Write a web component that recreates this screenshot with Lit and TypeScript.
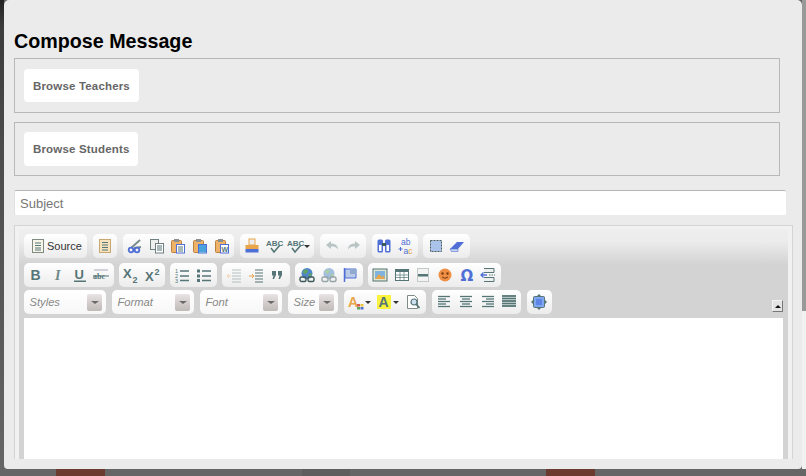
import { LitElement, css, html, svg } from "lit";
import { customElement } from "lit/decorators.js";

const TEAL = "#557576";
const BLUE = "#4f6fd6";
const ORANGE = "#e9a54a";
const SANS = "Liberation Sans, sans-serif";

const lines = (ys: number[], x1 = 2, x2 = 14, w = 1.3) =>
  ys.map(
    (y) =>
      svg`<line x1=${x1} x2=${x2} y1=${y} y2=${y} stroke=${TEAL} stroke-width=${w} />`,
  );

const paste = (inner: unknown) => svg`
  <rect x="1.5" y="2.5" width="10" height="12" rx="1" fill="#eeb268" stroke="#b9803f" />
  <rect x="4" y="1" width="5" height="3" fill="#8a8f92" />
  <rect x="6.5" y="6.5" width="8" height="8.5" fill="#fff" stroke=${BLUE} />
  ${inner}`;

const globe = svg`
  <circle cx="8" cy="6.5" r="5.5" fill="#4f86c9" />
  <path d="M4 4l3-2 2 2-2 3-3-1zM9 8l3-2 1 2-3 2z" fill="#5fa35f" />
  <rect x="1" y="10" width="6" height="4.5" rx="1.5" fill="none" stroke="#3f5a5a" stroke-width="1.4" />
  <rect x="9" y="10" width="6" height="4.5" rx="1.5" fill="none" stroke="#3f5a5a" stroke-width="1.4" />`;

const label = (x: number, y: number, size: number, t: string) =>
  svg`<text x=${x} y=${y} font-size=${size} font-family=${SANS} font-weight="bold" fill=${TEAL}>${t}</text>`;

const check = svg`<path d="M5 10l3 4 6-7" fill="none" stroke=${TEAL} stroke-width="1.6" />`;

const ICONS: Record<string, unknown> = {
  source: svg`<rect x="2.5" y="1.5" width="11" height="13" fill="#f7f4e8" stroke="#7f8a80" />${lines([5, 7.5, 10, 12], 5, 11, 1)}`,
  templates: svg`<rect x="2.5" y="1.5" width="11" height="13" fill="#f6e2bd" stroke="#c9a873" />${lines([4.5, 7, 9.5, 12], 5, 11, 1.1)}`,
  cut: svg`<path d="M4 10L13 2M7 10l7-1" stroke="#7d8e8e" stroke-width="2" fill="none" /><circle cx="4" cy="12" r="2.3" fill="none" stroke=${BLUE} stroke-width="1.8" /><circle cx="10" cy="12" r="2.3" fill="none" stroke=${BLUE} stroke-width="1.8" />`,
  copy: svg`<rect x="1.5" y="1.5" width="8" height="10" fill="#eef0ee" stroke="#6f8080" /><rect x="6.5" y="5.5" width="8" height="9.5" fill="#fff" stroke="#6f8080" />${lines([8, 10, 12], 8, 13, 1)}`,
  paste: paste(lines([9, 11, 13], 8, 13, 1)),
  pasteText: paste(svg`<rect x="7" y="7" width="7" height="7.5" fill="#4aa3dc" />`),
  pasteWord: paste(label(7.5, 13.5, 7, "W")),
  print: svg`<rect x="5" y="1" width="6" height="6" fill="#eee" stroke=${ORANGE} /><rect x="1.5" y="7" width="13" height="4" fill=${ORANGE} /><rect x="1.5" y="11" width="13" height="3.5" fill=${BLUE} />`,
  spell: svg`${label(0, 7.5, 8, "ABC")}${check}`,
  undo: svg`<path d="M2 7l5-4v2.5c4 0 7 2 7 6-1.5-2.5-4-3-7-3V11z" fill="#b9c5c5" />`,
  redo: svg`<path d="M14 7L9 3v2.5c-4 0-7 2-7 6 1.5-2.5 4-3 7-3V11z" fill="#b9c5c5" />`,
  find: svg`<rect x="1.5" y="1.5" width="5.5" height="13" rx="1.5" fill=${BLUE} /><rect x="9" y="1.5" width="5.5" height="13" rx="1.5" fill=${BLUE} /><rect x="6" y="5" width="4" height="3" fill="#3f5a5a" /><rect x="3" y="7" width="2.5" height="6" fill="#fff" /><rect x="10.5" y="7" width="2.5" height="6" fill="#fff" />`,
  replace: svg`<text x="3" y="7" font-size="8.5" font-family=${SANS} fill=${BLUE}>ab</text><text x="5.5" y="15.5" font-size="8.5" font-family=${SANS} fill=${BLUE}>a<tspan fill=${ORANGE}>c</tspan></text><path d="M0.5 11h4M2.5 9v4" stroke=${BLUE} />`,
  selectAll: svg`<rect x="2.5" y="2.5" width="11" height="11" fill="#a9c3ea" stroke="#4a5d5d" stroke-dasharray="2 1" />`,
  eraser: svg`<path d="M1 11l7-7h7l-6 7z" fill=${BLUE} /><path d="M1 11h8v2.5H2.5z" fill="#c9d6ee" stroke=${BLUE} stroke-width=".6" />`,
  bold: label(2.5, 13, 14, "B"),
  italic: svg`<text x="5" y="13" font-size="14" font-family="Liberation Serif, serif" font-style="italic" font-weight="bold" fill="#6f8686">I</text>`,
  underline: svg`${label(2.5, 11.5, 13, "U")}<rect x="2" y="13.5" width="12" height="1.5" fill=${TEAL} />`,
  strike: svg`<text x="0" y="12" font-size="8" font-family="Liberation Serif, serif" font-weight="bold" fill=${TEAL}>abc</text><line x1="0" x2="16" y1="9" y2="9" stroke=${TEAL} /><line x1="1" x2="15" y1="3" y2="3" stroke="#aab" />`,
  sub: svg`${label(0, 11, 13, "X")}${label(9.5, 15.5, 9, "2")}`,
  sup: svg`${label(0, 14, 13, "X")}${label(9.5, 7.5, 9, "2")}`,
  ol: svg`<text x="1" y="5.5" font-size="5.5" font-family=${SANS} fill=${TEAL}>1</text><text x="1" y="10.5" font-size="5.5" font-family=${SANS} fill=${TEAL}>2</text><text x="1" y="15.5" font-size="5.5" font-family=${SANS} fill=${TEAL}>3</text>${lines([4, 9, 13.5], 6, 15)}`,
  ul: svg`<rect x="1" y="2.5" width="3" height="3" fill=${TEAL} /><rect x="1" y="7.5" width="3" height="3" fill=${TEAL} /><rect x="1" y="12" width="3" height="3" fill=${TEAL} />${lines([4, 9, 13.5], 6, 15)}`,
  outdent: svg`<g opacity=".4">${lines([3, 6, 9, 12, 15], 6, 15, 1)}<path d="M1 9h4M3 7l-2 2 2 2" stroke=${ORANGE} fill="none" /></g>`,
  indent: svg`${lines([3, 6, 9, 12, 15], 7, 15, 1)}<path d="M1 9h5M4 7l2 2-2 2" stroke=${ORANGE} fill="none" />`,
  quote: svg`<path d="M3 4h4v4l-2 4H3.5l1-3.5H3zM9 4h4v4l-2 4H9.5l1-3.5H9z" fill=${TEAL} />`,
  link: globe,
  unlink: svg`<g opacity=".5">${globe}</g>`,
  anchor: svg`<path d="M2.5 1v14" stroke=${BLUE} stroke-width="1.5" /><path d="M3 2h11v9H3z" fill="#b9cbe6" stroke=${BLUE} /><path d="M8 2h6v5H8z" fill="#8fa9cf" />`,
  image: svg`<rect x="1" y="2" width="14" height="12" fill="#dfe6d2" stroke=${TEAL} /><rect x="3" y="4" width="10" height="8" fill="#7fb2e0" /><path d="M3 12l4-5 3 3 1.5-1.5L13 12z" fill=${ORANGE} />`,
  table: svg`<rect x="1.5" y="2.5" width="13" height="11" fill="#fff" stroke=${TEAL} /><rect x="1.5" y="2.5" width="13" height="2.5" fill=${TEAL} /><path d="M6 5v8M10 5v8M2 8h12M2 10.5h12" stroke=${TEAL} stroke-width=".7" />`,
  hr: svg`<rect x="2.5" y="1.5" width="11" height="13" fill="#f3f3f3" stroke="#c3c8c8" /><rect x="3" y="7" width="10" height="2.5" fill=${TEAL} />`,
  smiley: svg`<circle cx="8" cy="8" r="6.5" fill="#ee8f45" /><circle cx="5.5" cy="6.5" r="1.2" fill="#7a3b10" /><circle cx="10.5" cy="6.5" r="1.2" fill="#7a3b10" /><path d="M5 10q3 2.5 6 0" fill="none" stroke="#7a3b10" />`,
  omega: svg`<text x="1.5" y="13.5" font-size="15" font-weight="bold" font-family="DejaVu Sans, sans-serif" fill=${BLUE}>Ω</text>`,
  pagebreak: svg`<path d="M4 1.5h10v4H4M4 14.5h10v-4H4" fill="#eee" stroke=${TEAL} /><path d="M1 8h6M3.5 5.5L1 8l2.5 2.5" fill="none" stroke=${BLUE} stroke-width="1.3" /><path d="M9 8h6" stroke=${TEAL} stroke-dasharray="1.5 1" />`,
  textColor: svg`<text x="0" y="12.5" font-size="14" font-weight="bold" font-family=${SANS} fill=${ORANGE}>A</text><rect x="9" y="10" width="3" height="2.5" fill="#d65a4a" /><rect x="12.5" y="10" width="3" height="2.5" fill="#e9c53a" /><rect x="9" y="13" width="3" height="2.5" fill="#5fa35f" /><rect x="12.5" y="13" width="3" height="2.5" fill=${BLUE} />`,
  bgColor: svg`<rect x="1" y="1" width="14" height="14" fill="#fbf33c" /><text x="2.5" y="13" font-size="14" font-weight="bold" font-family=${SANS} fill=${TEAL}>A</text>`,
  findDoc: svg`<path d="M2.5 1.5h7l3 3v10h-10z" fill="#fff" stroke="#7f8a8a" /><circle cx="9" cy="8" r="3" fill="#cfe0f2" stroke=${TEAL} stroke-width="1.2" /><path d="M11 10l3.5 4" stroke=${TEAL} stroke-width="1.8" />`,
  left: svg`${lines([2.5, 7.5, 12.5], 2, 14)}${lines([5, 10], 2, 10)}`,
  center: svg`${lines([2.5, 7.5, 12.5], 2, 14)}${lines([5, 10], 4, 12)}`,
  right: svg`${lines([2.5, 7.5, 12.5], 2, 14)}${lines([5, 10], 6, 14)}`,
  justify: lines([2, 4.5, 7, 9.5, 12], 1, 15, 1.8),
  maximize: svg`<path d="M8 0l2 2H6zM8 16l-2-2h4zM0 8l2-2v4zM16 8l-2 2V6z" fill=${TEAL} /><rect x="2.5" y="2.5" width="11" height="11" rx="1" fill="#7fa6ee" stroke=${TEAL} /><rect x="5" y="5" width="6" height="6" fill="#5f86e6" />`,
};

type Btn = { i: string; arrow?: boolean };

const b = (i: string): Btn => ({ i });
const arrow = (i: string): Btn => ({ i, arrow: true });

const ROW1: Btn[][] = [
  [b("templates")],
  [b("cut"), b("copy"), b("paste"), b("pasteText"), b("pasteWord")],
  [b("print"), b("spell"), arrow("spell")],
  [b("undo"), b("redo")],
  [b("find"), b("replace")],
  [b("selectAll"), b("eraser")],
];
const ROW2: Btn[][] = [
  [b("bold"), b("italic"), b("underline"), b("strike")],
  [b("sub"), b("sup")],
  [b("ol"), b("ul")],
  [b("outdent"), b("indent"), b("quote")],
  [b("link"), b("unlink"), b("anchor")],
  [b("image"), b("table"), b("hr"), b("smiley"), b("omega"), b("pagebreak")],
];

@customElement("app-root")
export class AppRoot extends LitElement {
  static styles = css`
    :host {
      display: block;
      width: 806px;
      height: 476px;
      overflow: hidden;
      background: #666;
      font-family: "Liberation Sans", Arial, sans-serif;
    }
    .page {
      display: grid;
      grid-template-columns: 4px 798px 4px;
      grid-template-rows: 469px 7px;
      height: 476px;
    }
    .edge-left {
      background: linear-gradient(#222 0, #3c3c3c 26px, #4c4c4c 150px, #666 100%);
    }
    .edge-right {
      display: flex;
      flex-direction: column;
    }
    .scroll-thumb {
      height: 311px;
      background: #999;
    }
    .scroll-rest {
      flex: 1;
      background: #f1f1f1;
    }
    .modal {
      background: #ebebeb;
      border-radius: 5px 5px 4px 4px;
      padding: 30px 9px 0 10px;
      overflow: hidden;
    }
    h1 {
      margin: 0 0 6px;
      font-size: 19.7px;
      line-height: 22px;
      font-weight: bold;
      color: #000;
    }
    .box {
      width: 766px;
      box-sizing: border-box;
      border: 1px solid #b8b8b8;
      padding: 10px 9px;
      margin-bottom: 9px;
      display: flex;
    }
    .box.second {
      margin-bottom: 14px;
      padding: 9px 9px;
    }
    .pick {
      height: 33px;
      padding: 0 9px;
      background: #fff;
      border: none;
      border-radius: 4px;
      font: bold 11.5px "Liberation Sans", Arial, sans-serif;
      letter-spacing: 0.17px;
      color: #666;
    }
    .second .pick {
      height: 34px;
    }
    input {
      display: block;
      width: 772px;
      height: 25px;
      box-sizing: border-box;
      border: none;
      border-top: 1px solid #b5b5b5;
      border-left: 1px solid #e0e0e0;
      border-radius: 2px;
      background: #fff;
      padding: 0 5px;
      margin-bottom: 10px;
      font: 13px "Liberation Sans", Arial, sans-serif;
    }
    input::placeholder {
      color: #777;
      opacity: 1;
    }
    .editor {
      width: 779px;
      box-sizing: border-box;
      height: 234px;
      border: 1px solid #d4d4d4;
      border-bottom: none;
      background: #f1f1f1;
      padding: 3px 4px 0;
    }
    .inner {
      height: 230px;
      display: flex;
      flex-direction: column;
      background: linear-gradient(#eee 0, #ececec 12px, #d3d3d3 36px);
    }
    .toolbar {
      padding: 5px 5px 4px;
    }
    .row {
      display: flex;
      height: 24px;
    }
    .r1 {
      gap: 5.5px;
      margin-bottom: 5px;
    }
    .r2 {
      gap: 5px;
      margin-bottom: 3px;
    }
    .r3 {
      gap: 6px;
    }
    .group {
      display: flex;
      align-items: center;
      padding: 0 1.5px;
      border-radius: 5px;
      background: linear-gradient(#fff, #ececec);
      box-sizing: border-box;
    }
    .btn {
      width: 21.7px;
      height: 22px;
      display: flex;
      align-items: center;
      justify-content: center;
      flex: none;
    }
    .btn.more {
      width: 28.2px;
      gap: 1px;
    }
    .btn svg,
    .source svg {
      width: 16px;
      height: 16px;
      flex: none;
      overflow: visible;
    }
    .caret {
      width: 0;
      height: 0;
      border: 3px solid transparent;
      border-top: 3px solid #333;
      border-bottom: none;
      flex: none;
    }
    .source {
      width: 63px;
      gap: 1px;
      padding-left: 6px;
      font-size: 11px;
      color: #333;
    }
    .combo {
      width: 82px;
      justify-content: space-between;
      padding: 0 4px 0 5.5px;
      background: linear-gradient(#fff, #f7f7f7);
      font-size: 11.2px;
      font-style: italic;
      color: #888;
    }
    .combo.size {
      width: 50px;
    }
    .drop {
      width: 15px;
      height: 17px;
      border-radius: 2px;
      background: linear-gradient(#e8e4e3, #bfb9b7);
      display: flex;
      align-items: center;
      justify-content: center;
    }
    .drop .caret {
      border-top-color: #6a6a6a;
      border-width: 3px 4px 0;
      border-top-style: solid;
    }
    .colors {
      width: 82px;
    }
    .aligns {
      width: 89px;
    }
    .collapse {
      margin: 10px 0 2px auto;
      width: 11px;
      height: 12px;
      box-sizing: border-box;
      align-self: flex-end;
      background: #e4e4e4;
      border: 1px solid;
      border-color: #f4f4f4 #777 #777 #f4f4f4;
      display: flex;
      align-items: center;
      justify-content: center;
    }
    .collapse i {
      width: 0;
      height: 0;
      border: 3px solid transparent;
      border-bottom: 3px solid #111;
      border-top: none;
    }
    .content {
      flex: 1;
      background: #fff;
      margin: 0 5px;
    }
    .under {
      grid-column: 1 / -1;
      display: flex;
      padding-left: 56px;
    }
    .under span {
      width: 49px;
      background: #6c3b2f;
    }
    .under span.dim {
      width: 48px;
      margin-left: 197px;
      background: #5e5e5e;
    }
    .under span.last {
      margin-left: 196px;
    }
  `;

  private renderButton(x: Btn) {
    return html`<div class="btn ${x.arrow ? "more" : ""}">
      <svg viewBox="0 0 16 16">${ICONS[x.i]}</svg>
      ${x.arrow ? html`<span class="caret"></span>` : ""}
    </div>`;
  }

  private renderGroups(groups: Btn[][]) {
    return groups.map(
      (g) => html`<div class="group">${g.map((x) => this.renderButton(x))}</div>`,
    );
  }

  private renderCombo(name: string, cls = "") {
    return html`<div class="group combo ${cls}">
      <span>${name}</span>
      <div class="drop"><span class="caret"></span></div>
    </div>`;
  }

  render() {
    return html`<div class="page">
      <div class="edge-left"></div>
      <div class="modal">
        <h1>Compose Message</h1>
        <div class="box"><button class="pick">Browse Teachers</button></div>
        <div class="box second"><button class="pick">Browse Students</button></div>
        <input placeholder="Subject" />
        <div class="editor">
          <div class="inner">
            <div class="toolbar">
              <div class="row r1">
                <div class="group source">
                  <svg viewBox="0 0 16 16">${ICONS.source}</svg><span>Source</span>
                </div>
                ${this.renderGroups(ROW1)}
              </div>
              <div class="row r2">${this.renderGroups(ROW2)}</div>
              <div class="row r3">
                ${this.renderCombo("Styles")} ${this.renderCombo("Format")}
                ${this.renderCombo("Font")} ${this.renderCombo("Size", "size")}
                <div class="group colors">
                  ${this.renderButton(arrow("textColor"))}
                  ${this.renderButton(arrow("bgColor"))}
                  ${this.renderButton(b("findDoc"))}
                </div>
                <div class="group aligns">
                  ${["left", "center", "right", "justify"].map((i) =>
                    this.renderButton(b(i)),
                  )}
                </div>
                <div class="group">${this.renderButton(b("maximize"))}</div>
                <div class="collapse"><i></i></div>
              </div>
            </div>
            <div class="content"></div>
          </div>
        </div>
      </div>
      <div class="edge-right">
        <div class="scroll-thumb"></div>
        <div class="scroll-rest"></div>
      </div>
      <div class="under">
        <span></span><span class="dim"></span><span class="last"></span>
      </div>
    </div>`;
  }
}
